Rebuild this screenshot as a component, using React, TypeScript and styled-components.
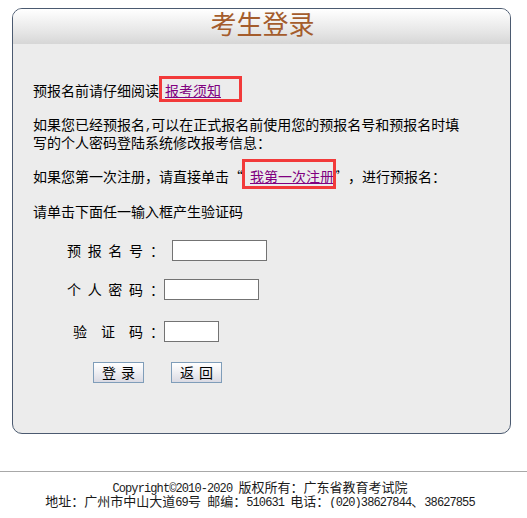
import React from "react";
import styled, { createGlobalStyle } from "styled-components";

const GlobalStyle = createGlobalStyle`
  html, body {
    margin: 0;
    padding: 0;
    background: #ffffff;
  }
  body {
    font-family: "Noto Sans CJK SC", "Liberation Sans", sans-serif;
    color: #000;
  }
`;

const Page = styled.div`
  width: 527px;
  padding-top: 8px;
`;

const Panel = styled.div`
  margin-left: 12px;
  width: 497px;
  height: 424px;
  border: 1px solid #4b5a70;
  border-radius: 10px;
  background: #ececec;
  overflow: hidden;
`;

const Header = styled.div`
  height: 35px;
  background: linear-gradient(to bottom, #ffffff 0%, #e4e4e4 70%, #d6d6d6 100%);
  display: flex;
  justify-content: center;
  align-items: flex-start;
`;

const Title = styled.h1`
  margin: -1px 0 0 2px;
  font-size: 26px;
  line-height: 30px;
  font-weight: 400;
  color: #a45c2c;
`;

const Body = styled.div`
  padding-left: 20px;
`;

const Para = styled.p<{ $top: number }>`
  margin: ${({ $top }) => $top}px 0 0 0;
  max-width: 432px;
  font-size: 14px;
  line-height: 18px;
`;

// red annotation boxes drawn over the two links
const Marked = styled.span<{ $l: number; $r: number; $t: number; $b: number; $gap: number }>`
  position: relative;
  display: inline-block;
  vertical-align: top;
  margin-left: ${({ $gap }) => $gap}px;
  line-height: 18px;

  &::after {
    content: "";
    position: absolute;
    left: ${({ $l }) => $l}px;
    right: ${({ $r }) => $r}px;
    top: ${({ $t }) => $t}px;
    bottom: ${({ $b }) => $b}px;
    border: 3px solid #f23a3a;
    pointer-events: none;
  }
`;

const Quote = styled.span<{ $r: number }>`
  margin-right: ${({ $r }) => $r}px;
`;

const Link = styled.a`
  color: #800080;
  text-decoration: underline;
  cursor: pointer;
`;

const Form = styled.div`
  padding-left: 54px;
`;

const Row = styled.div<{ $top: number }>`
  display: flex;
  align-items: center;
  height: 21px;
  margin-top: ${({ $top }) => $top}px;
  font-size: 14px;
`;

const Label = styled.div<{ $pad: number }>`
  width: 76px;
  box-sizing: border-box;
  padding-left: ${({ $pad }) => $pad}px;
  display: flex;
  justify-content: space-between;
  line-height: 21px;
`;

const Colon = styled.span`
  margin-left: 7px;
  width: 14px;
  line-height: 21px;
`;

const Field = styled.input<{ $w: number; $gap: number }>`
  box-sizing: border-box;
  width: ${({ $w }) => $w}px;
  height: 21px;
  margin: 0 0 0 ${({ $gap }) => $gap}px;
  padding: 0 3px;
  border: 1px solid #737373;
  background: #fff;
  outline: none;
  font-size: 13px;
`;

const Buttons = styled.div`
  display: flex;
  gap: 27px;
  margin-top: 20px;
  padding-left: 80px;
`;

const Button = styled.button`
  box-sizing: border-box;
  width: 51px;
  height: 21px;
  padding: 0;
  border: 1px solid #7f9db9;
  background: linear-gradient(to bottom, #ffffff 0%, #f2f2f5 40%, #dadae3 100%);
  font-family: "Noto Sans CJK SC", sans-serif;
  font-size: 14px;
  line-height: 19px;
  letter-spacing: 5px;
  text-indent: 5px;
  color: #000;
  cursor: pointer;
`;

const Rule = styled.hr`
  margin: 37px 0 0 0;
  border: 0;
  border-top: 1px solid #a8a8a8;
  height: 0;
`;

const Footer = styled.div`
  margin-top: 8px;
  text-align: center;
  font-size: 13px;
  line-height: 14px;
  color: #1a1a1a;
  margin-right: 7px;
`;

const Mono = styled.span`
  font-family: "Liberation Mono", monospace;
  font-size: 12px;
  line-height: 0;
  letter-spacing: -0.9px;
`;

const spread = (s: string) => s.split("").map((c, i) => <span key={i}>{c}</span>);

export default function App() {
  return (
    <>
      <GlobalStyle />
      <Page>
        <Panel>
          <Header>
            <Title>考生登录</Title>
          </Header>
          <Body>
            <Para $top={37}>
              预报名前请仔细阅读
              <Marked $gap={6} $l={-6} $r={-21} $t={-5} $b={-3}>
                <Link>报考须知</Link>
              </Marked>
            </Para>
            <Para $top={16}>
              如果您已经预报名<Mono>,</Mono>可以在正式报名前使用您的预报名号和预报名时填写的个人密码登陆系统修改报考信息：
            </Para>
            <Para $top={16}>
              如果您第一次注册，请直接单击“
              <Marked $gap={7} $l={-8} $r={-2} $t={-8} $b={-4}>
                <Link>我第一次注册</Link>
              </Marked>
              <Quote $r={7}>”</Quote>，进行预报名：
            </Para>
            <Para $top={17}>请单击下面任一输入框产生验证码</Para>
          </Body>
          <Form>
            <Row $top={20}>
              <Label $pad={0}>{spread("预报名号")}</Label>
              <Colon>：</Colon>
              <Field $w={95} $gap={8} type="text" />
            </Row>
            <Row $top={18}>
              <Label $pad={0}>{spread("个人密码")}</Label>
              <Colon>：</Colon>
              <Field $w={95} $gap={0} type="password" />
            </Row>
            <Row $top={21}>
              <Label $pad={6}>{spread("验证码")}</Label>
              <Colon>：</Colon>
              <Field $w={55} $gap={0} type="text" />
            </Row>
          </Form>
          <Buttons>
            <Button>登录</Button>
            <Button>返回</Button>
          </Buttons>
        </Panel>
        <Rule />
        <Footer>
          <div>
            <Mono>Copyright©2010-2020 </Mono>版权所有：广东省教育考试院
          </div>
          <div>
            地址：广州市中山大道<Mono>69</Mono>号<Mono> </Mono>邮编：<Mono>510631 </Mono>电话：
            <Mono>(020)38627844</Mono>、<Mono>38627855</Mono>
          </div>
        </Footer>
      </Page>
    </>
  );
}
